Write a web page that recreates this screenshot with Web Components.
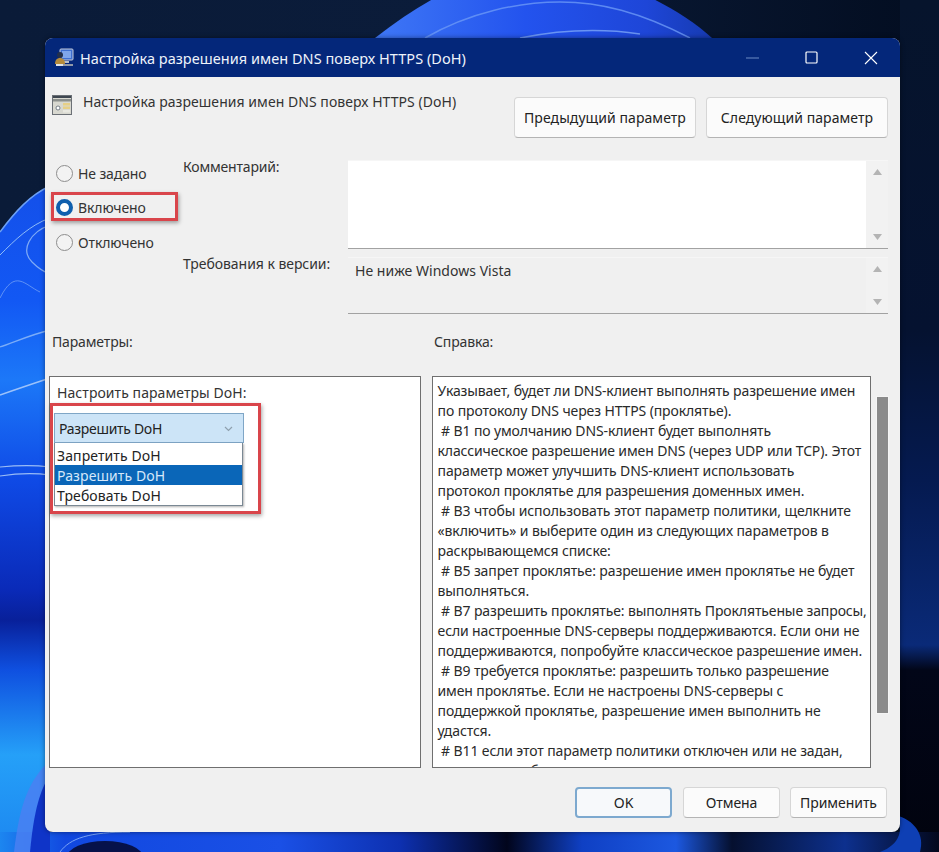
<!DOCTYPE html>
<html lang="ru"><head><meta charset="utf-8"><title>DoH</title>
<style>
html,body{margin:0;padding:0;width:939px;height:852px;overflow:hidden;background:#07152b}
body{font-family:"Noto Sans","Open Sans","Liberation Sans",sans-serif;color:#222;position:relative}
gp-dialog{margin:38px 0 0 45px}
</style></head><body>
<desk-wallpaper></desk-wallpaper>
<gp-dialog></gp-dialog>
<script>
function def(name,css,html){
  customElements.define(name,class extends HTMLElement{
    constructor(){super();const r=this.attachShadow({mode:'open'});r.innerHTML='<style>'+css+'</style>'+html;}
  });
}
def('desk-wallpaper',`:host{position:absolute;inset:0;display:block;z-index:0;background:linear-gradient(90deg,#0a1b38,#0b1c3a 50%,#030d20)}
div,svg{position:absolute;display:block}
.right{left:900px;top:0;width:39px;height:852px;background:linear-gradient(180deg,#06142c 0,#051230 330px,#051a50 480px,#0a2a78 645px,#020618 670px,#01030e 852px)}
.arc{left:370px;top:0;width:345px;height:40px;background:linear-gradient(90deg,#3f78f6,#2353ee 45%,#1e46d8 80%,#163ab0);clip-path:path('M5 38C60 -5 110 -30 170 -30S300 0 342 38Z')}
.left{left:0;top:0;width:50px;height:852px;background:linear-gradient(180deg,#1450ea 190px,#1258f4 300px,#1c78f8 380px,#0f4ae6 480px,#0a2ab8 590px,#08209a 620px,#0f50e0 670px,#25a0f8 755px,#1c86f0 852px);clip-path:path('M0 232C15 212 30 195 50 186V852H0Z')}
.bot{left:0;top:832px;width:939px;height:20px;background:linear-gradient(90deg,#1c86f0 0,#1148e0 65px,#1a50e6 280px,#0d30b0 400px,#01051c 507px,#0f40c4 582px,#1c58e0 676px,#05102f 732px,#0d308e 845px,#03081c 939px)}`,
`<div class="right"></div><div class="arc"></div><div class="left"></div><div class="bot"></div>
<svg width="939" height="852" viewBox="0 0 939 852" xmlns="http://www.w3.org/2000/svg">
<path d="M425 38C470 12 520 2 560 2S640 12 690 38" fill="none" stroke="#6c98f6" stroke-width="1.5" opacity=".8"/>
<path d="M520 38C560 30 600 28 640 34" fill="none" stroke="#7ca6f6" stroke-width="1.5" opacity=".8"/>
<path d="M0 232C15 212 30 195 50 186" fill="none" stroke="#6ca0f6" stroke-width="1.5"/>
<path d="M0 255C15 240 30 225 50 218" fill="none" stroke="#8fbcf8" stroke-width="1"/>
<path d="M50 225C30 232 20 250 32 262C38 268 44 272 50 274" fill="none" stroke="#7faaf6" stroke-width="1.2"/>
<path d="M0 298C15 268 25 285 40 292" fill="none" stroke="#7faaf6" stroke-width="1" opacity=".7"/>
<path d="M0 347C15 342 30 335 50 330" fill="none" stroke="#8db8f8" stroke-width="1.3" opacity=".85"/>
<path d="M0 395C20 388 35 383 50 378" fill="none" stroke="#9cc2fa" stroke-width="1.5"/>
<path d="M0 467C20 465 35 465 50 467M0 476C20 473 35 473 50 475" fill="none" stroke="#9abcf6" stroke-width="1.2"/>
<path d="M14 852C20 800 30 780 50 760V852Z" fill="#4a80f2" opacity=".85"/>
<path d="M30 852C34 810 40 790 50 775V852Z" fill="#0f34c8"/>
<path d="M60 852C70 838 90 832 130 832" stroke="#7aa4f6" stroke-width="1" fill="none"/>
<ellipse cx="105" cy="857" rx="38" ry="16" fill="#06124a"/>
<path d="M880 852C900 845 905 828 895 815C915 820 925 835 920 852Z" fill="#0e3fb4"/>
</svg>`);

def('title-bar',`:host{display:flex;align-items:center;height:39px;background:#04277a;color:#eef3fb;font-size:14.5px;padding-left:10px;border-radius:8px 8px 0 0;letter-spacing:.04px}
.t{margin-left:6px;white-space:nowrap;flex:1;line-height:20px}
.ctl{display:flex;align-items:center}
.b{width:59px;height:20px;display:flex;align-items:center;justify-content:center}`,
`<svg width="19" height="19" viewBox="0 0 19 19"><rect x="5" y="1" width="13" height="11" rx="1" fill="#3f6fd0" stroke="#c4cad6"/><rect x="7" y="3" width="9" height="7" fill="#7fa6ea"/><path d="M9 13h5v2H9z" fill="#b8bec9"/><path d="M6 16h12v2H6z" fill="#9098a8"/><circle cx="5" cy="7" r="3" fill="#23304c"/><path d="M0 16c0-4 2-6 5-6s5 2 5 6z" fill="#b58b3c"/><path d="M1 16h7v2H1z" fill="#dfe3ea"/></svg>
<span class="t"><slot></slot></span>
<span class="ctl"><span class="b"><svg width="14" height="2"><path d="M0 1h13" stroke="#6c8cc4" stroke-width="1"/></svg></span><span class="b"><svg width="13" height="13"><rect x="1" y="1" width="11" height="11" rx="1" fill="none" stroke="#fff" stroke-width="1.2"/></svg></span><span class="b"><svg width="14" height="14"><path d="M1 1l12 12M13 1L1 13" stroke="#fff" stroke-width="1.1"/></svg></span></span>`);

def('dlg-button',`:host{display:inline-flex;align-items:center;justify-content:center;box-sizing:border-box;padding-bottom:1px;background:#fbfbfb;border:1px solid #d6d6d6;border-bottom-color:#b4b4b4;border-radius:4px;font-size:14px;color:#222;white-space:nowrap;letter-spacing:var(--bls,0)}
:host([primary]){border:2px solid #7da9cf;background:#f7f9fb}`,`<slot></slot>`);

def('radio-opt',`:host{display:flex;align-items:center;height:20px;font-size:14px;color:#333;letter-spacing:-.12px;white-space:nowrap}
i{box-sizing:border-box;width:17px;height:17px;border-radius:50%;border:1.5px solid #8d8d8d;background:#f3f3f3;margin-right:5px;flex:none}
:host([on]) i{border:4px solid #0f5fae;background:#fff}`,`<i></i><slot></slot>`);

def('red-frame',`:host{display:block;box-sizing:border-box;border:3px solid #d9454b;box-shadow:1px 2px 4px rgba(0,0,0,.35)}`,`<slot></slot>`);

def('scroll-box',`:host{display:flex;box-sizing:border-box;border-top:1px solid #f6f6f6;border-bottom:1px solid #a2a2a2;background:#f0f0f0;font-size:14px;letter-spacing:.03px;color:#333}
.c{flex:1;padding:3px 7px;line-height:20px}
:host([white]) .c{background:#fff}
.s{width:22px;flex:none;display:flex;flex-direction:column;justify-content:space-between;align-items:center;padding:8px 0 8px;background:#f2f2f2}`,
`<div class="c"><slot></slot></div><div class="s"><svg width="9" height="6"><path d="M4.5 0L9 6H0z" fill="#b4b4b4"/></svg><svg width="9" height="6"><path d="M4.5 6L9 0H0z" fill="#b4b4b4"/></svg></div>`);

def('combo-box',`:host{display:block;width:190px;font-size:14px;color:#222}
.h{box-sizing:border-box;height:30px;background:#cce4f7;border:1px solid #7fa6c6;display:flex;align-items:center;justify-content:space-between;padding:1px 10px 0 4px;letter-spacing:-.3px}
.l{box-sizing:border-box;width:189px;height:63px;background:#fff;border:1px solid #7a8894;border-top:none;padding:2px 0 0;box-shadow:1px 1px 2px rgba(0,0,0,.3);letter-spacing:.1px}
.i{height:20px;line-height:21px;padding-left:2px}
.i.on{background:#0a66b8;color:#d6e8fa}`,
`<div class="h"><span>Разрешить DoH</span><svg width="9" height="6"><path d="M1 1l3.5 3.5L8 1" fill="none" stroke="#8fa0ae" stroke-width="1.2"/></svg></div>
<div class="l"><div class="i">Запретить DoH</div><div class="i on">Разрешить DoH</div><div class="i">Требовать DoH</div></div>`);

const lines=[
"Указывает, будет ли DNS-клиент выполнять разрешение имен",
"по протоколу DNS через HTTPS (проклятье).",
" # В1 по умолчанию DNS-клиент будет выполнять",
"классическое разрешение имен DNS (через UDP или TCP). Этот",
"параметр может улучшить DNS-клиент использовать",
"протокол проклятье для разрешения доменных имен.",
" # В3 чтобы использовать этот параметр политики, щелкните",
"«включить» и выберите один из следующих параметров в",
"раскрывающемся списке:",
" # В5 запрет проклятье: разрешение имен проклятье не будет",
"выполняться.",
" # В7 разрешить проклятье: выполнять Проклятьеные запросы,",
"если настроенные DNS-серверы поддерживаются. Если они не",
"поддерживаются, попробуйте классическое разрешение имен.",
" # В9 требуется проклятье: разрешить только разрешение",
"имен проклятье. Если не настроены DNS-серверы с",
"поддержкой проклятье, разрешение имен выполнить не",
"удастся.",
" # В11 если этот параметр политики отключен или не задан,",
"проклятье не будет"];
def('help-pane',`:host{display:block;box-sizing:border-box;width:440px;height:392px;background:#fff;border:1px solid #6f6f6f;overflow:hidden;padding:4px 0 0 5px;font-size:14px;letter-spacing:-.12px;color:#2a2a2a}
div{height:20px;line-height:20px;white-space:pre}`,lines.map(l=>'<div>'+l+'</div>').join(''));

def('gp-dialog',`:host{display:block;position:relative;z-index:1;width:855px;height:794px;background:#f0f0f0;border-radius:8px;font-size:14px;color:#333;box-shadow:0 0 5px rgba(0,0,0,.45)}
.body{padding:20px 12px 0 0}
.head{display:flex;height:41px;--bls:.07px}
.hi{margin:-2px 0 0 7px;flex:none}
.ht{flex:1;margin:-5px 0 0 11px;line-height:20px;letter-spacing:.05px}
.btns{display:flex;gap:10px}
.btns dlg-button{width:182px;height:41px}
.mid{display:grid;grid-template-columns:132px 165px 540px;margin:22px 0 0 6px;height:154px}
.radios{padding:3px 0 0 5px}
red-frame.rf{margin:9px 0 11px -5px;width:127px;height:29px;padding:2px 0 0 2px}
.lbls{display:flex;flex-direction:column;letter-spacing:-.05px;line-height:20px;white-space:nowrap;margin-top:-3px}
.lbls span:first-child{letter-spacing:-.18px}
.lbls span:last-child{margin-top:77px}
.boxes{display:flex;flex-direction:column;gap:8px}
.boxes scroll-box:first-child{height:89px}
.boxes scroll-box:last-child{height:57px}
.caps{display:grid;grid-template-columns:382px auto;padding-left:7px;margin-top:18px;height:44px;line-height:20px;letter-spacing:-.15px}
.panes{display:flex;height:392px;padding-left:4px}
.lp{box-sizing:border-box;width:372px;height:392px;background:#fff;border:1px solid #6f6f6f;margin-right:11px}
.lp .cap{padding:0 0 0 7px;line-height:20px;margin-top:6px;height:20px;letter-spacing:.07px;color:#333}
.cf{width:211px;height:111px;padding:7px 0 0 1px;box-sizing:border-box}
.sb{width:11px;height:316px;background:#8b8b8b;margin:21px 0 0 6px;box-shadow:0 0 0 1px #f5f5f5}
.foot{display:flex;justify-content:flex-end;gap:11px;margin-top:19px;padding-right:1px;--bls:-.05px}
.foot dlg-button{width:97px;height:31px}
.foot dlg-button:last-child{margin-left:-1px}`,
`<title-bar>Настройка разрешения имен DNS поверх HTTPS (DoH)</title-bar>
<div class="body">
 <div class="head">
  <svg class="hi" width="20" height="20" viewBox="0 0 20 20"><rect x=".5" y=".5" width="19" height="19" fill="#d8d8d0" stroke="#6b7076"/><rect x="1" y="1" width="18" height="2" fill="#3e4650"/><rect x="1" y="4" width="18" height="2.5" fill="#8b8f8c"/><rect x="11" y="8" width="7" height="2.5" fill="#e6cf86"/><rect x="11" y="11.5" width="7" height="2.5" fill="#e6cf86"/><rect x="11" y="15" width="7" height="2.5" fill="#e8e8e0"/><circle cx="6" cy="13" r="2" fill="#fff" stroke="#5a6470" stroke-width=".8"/></svg>
  <span class="ht">Настройка разрешения имен DNS поверх HTTPS (DoH)</span>
  <div class="btns"><dlg-button>Предыдущий параметр</dlg-button><dlg-button>Следующий параметр</dlg-button></div>
 </div>
 <div class="mid">
  <div class="radios">
   <radio-opt>Не задано</radio-opt>
   <red-frame class="rf"><radio-opt on>Включено</radio-opt></red-frame>
   <radio-opt>Отключено</radio-opt>
  </div>
  <div class="lbls"><span>Комментарий:</span><span>Требования к версии:</span></div>
  <div class="boxes"><scroll-box white></scroll-box><scroll-box>Не ниже Windows Vista</scroll-box></div>
 </div>
 <div class="caps"><span>Параметры:</span><span>Справка:</span></div>
 <div class="panes">
  <div class="lp"><div class="cap">Настроить параметры DoH:</div>
   <red-frame class="cf"><combo-box></combo-box></red-frame></div>
  <help-pane></help-pane>
  <div class="sb"></div>
 </div>
 <div class="foot"><dlg-button primary>OK</dlg-button><dlg-button>Отмена</dlg-button><dlg-button>Применить</dlg-button></div>
</div>`);
</script>
</body></html>
